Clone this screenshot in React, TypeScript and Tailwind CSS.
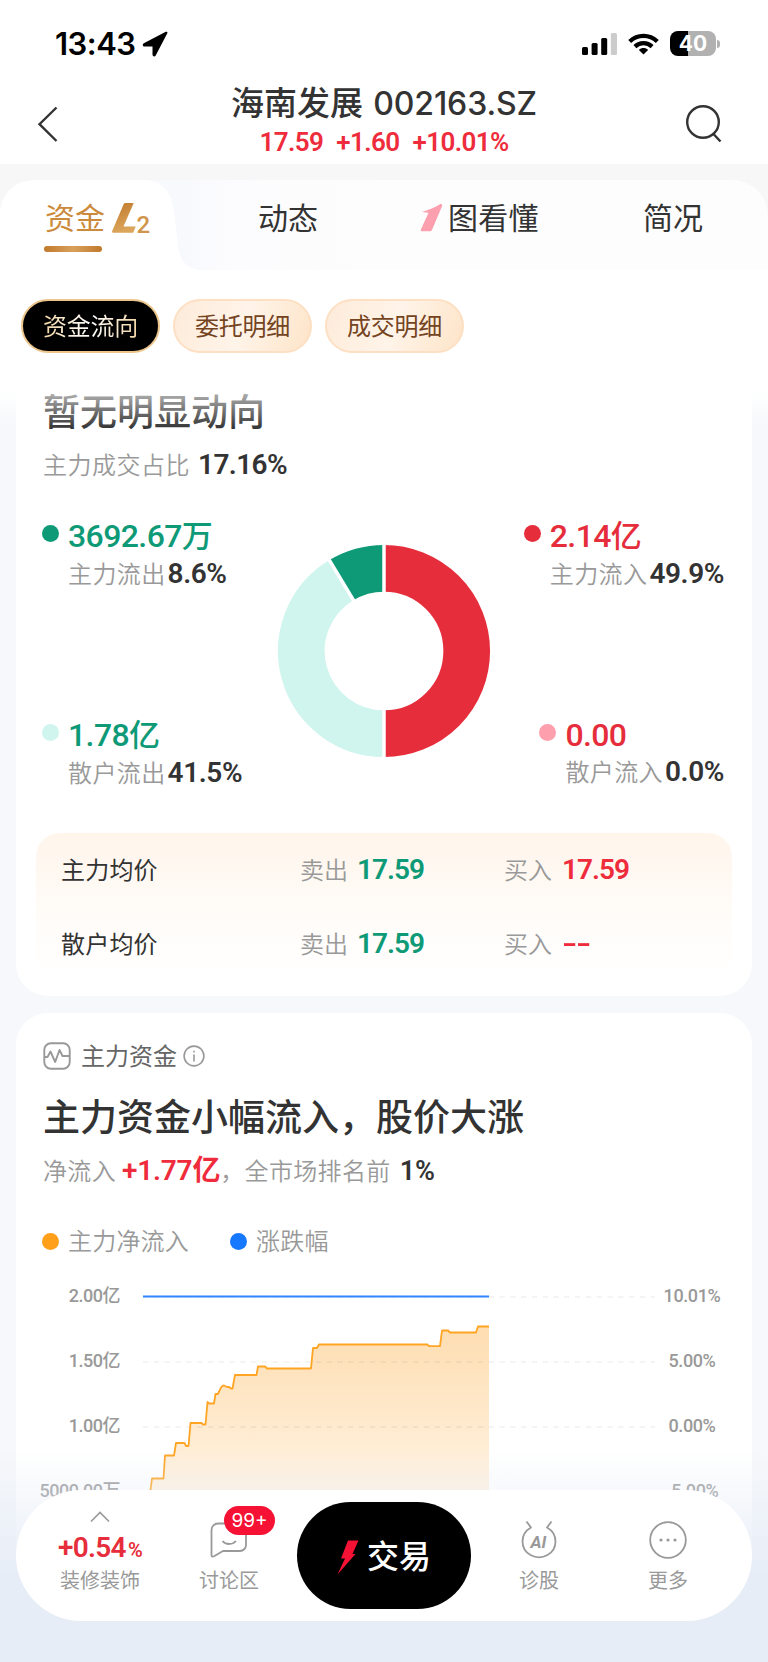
import type { ReactNode } from "react"
import { clsx } from "clsx"

const actions = ["资金流向", "委托明细", "成交明细"]

const prices = [
  { label: "主力均价", sell: "17.59", buy: "17.59" },
  { label: "散户均价", sell: "17.59", buy: "--" },
]

const segments = [
  { from: 0, to: 180, color: "#e62d3b" },
  { from: 180, to: 329, color: "#d0f5ee" },
  { from: 329, to: 360, color: "#0e9a77" },
]

const axis = [
  { left: "2.00亿", right: "10.01%" },
  { left: "1.50亿", right: "5.00%" },
  { left: "1.00亿", right: "0.00%" },
  { left: "5000.00万", right: "-5.00%" },
]

const flowLine =
  "M0 262 L7.5 230 L9 218.5 H20.5 L22 195.5 H31 L33 183 H41.5 L43 186 H45.5 L47.5 163 H58.5 L60 164.5 H62.5 L64.5 142 L66 143.5 H71 L72.5 134 H75 C77 130 78 125 81 125.5 L84 127 H86 L88 128.5 H89.5 L92 115 H113.500 L115 106.500 H122 L124 108.500 H168 L170 88 H174 L176 84.500 H284.500 L286 86.200 H297 L299 70.500 H305 L307 72.500 H333 L335 66.500 H346"

function StatusBar() {
  return (
    <div className="flex h-21 items-start justify-between pr-[48px] pl-[55px] text-black">
      <div className="mt-[24px] flex items-center gap-[6px]">
        <span className="font-[family-name:Inter] text-[31px] leading-10 font-semibold tracking-[-0.5px]">13:43</span>
        <svg width="26" height="26" viewBox="0 0 26 26">
          <path d="M23.800.8 1.800 12.300c-1.700.9-1.200 3.200.7 3.200H10.500v8c0 2 2.300 2.600 3.200.9L25.300 2.300c.5-1.200-.4-2-1.500-1.500z" fill="#000" />
        </svg>
      </div>
      <div className="mt-[31px] flex items-center">
        <svg width="36" height="24" viewBox="0 0 36 24">
          <rect x="0" y="15" width="6" height="8" rx="1.500" />
          <rect x="9.600" y="11" width="6" height="12" rx="1.500" />
          <rect x="19.200" y="6" width="6" height="17" rx="1.500" />
          <rect x="28.800" y="1" width="6.200" height="22" rx="1.500" fill="#ccc" />
        </svg>
        <svg className="ml-[10px]" width="31" height="24" viewBox="0 0 31 24" fill="none" stroke="#000" strokeWidth="4.200">
          <path d="M1.700 9.400C9.500 1.900 21.500 1.900 29.300 9.400" />
          <path d="M6.900 14.600C11.800 10 19.200 10 24.100 14.600" />
          <path d="M15.500 22.600 10.900 17.900C13.500 15.500 17.500 15.500 20.100 17.900Z" fill="#000" stroke="none" />
        </svg>
        <div className="ml-[11px] flex h-[25px] w-[46px] items-center justify-center rounded-[8px] bg-linear-to-r from-black from-40% to-[#b1b1b1] to-40% font-[family-name:Inter] text-[21px] font-bold text-white">
          40
        </div>
        <div className="ml-px h-2 w-[3px] rounded-r-full bg-[#b1b1b1]" />
      </div>
    </div>
  )
}

function Header() {
  return (
    <header className="bg-white">
      <StatusBar />
      <div className="flex h-20 justify-between px-[37px]">
        <svg className="mt-[22px] mr-[10px]" width="36" height="36" viewBox="0 0 36 36" fill="none" stroke="#333" strokeWidth="2.400">
          <path d="M19.500 1.500 2.500 18.200 19.500 35" />
        </svg>
        <div className="text-center">
          <h1 className="text-[33px] leading-[39px] font-medium whitespace-pre text-[#333]">
            海南发展 <span className="ml-[2px] font-[family-name:Inter] text-[32px] tracking-[-0.1px]">002163.SZ</span>
          </h1>
          <div className="flex justify-center gap-[13px] text-[26px] leading-[38px] font-semibold tracking-[-0.6px] text-[#ee2c3c]">
            <span>17.59</span>
            <span>+1.60</span>
            <span>+10.01%</span>
          </div>
        </div>
        <svg className="mt-[21px] mr-[9px]" width="37" height="38" viewBox="0 0 37 38" fill="none" stroke="#333" strokeWidth="2.400">
          <circle cx="18" cy="17" r="15.800" />
          <path d="M28 28.500 35.500 36.500" />
        </svg>
      </div>
    </header>
  )
}

function Tabs() {
  return (
    <nav className="relative mt-4 flex h-[90px] rounded-t-[36px] bg-linear-to-r from-[#f8f9fd] from-24% via-[#fcfcfe] via-30% to-[#fdfdfd] to-50% text-[30px] leading-[42px] text-[#333]">
      <svg className="absolute top-0 left-0" width="204" height="90" viewBox="0 0 204 90">
        <path d="M0 90V36C0 14 14 0 36 0H144C164 0 172 14 174 32L178 66C180 82 188 90 204 90Z" fill="#fff" />
      </svg>
      <div className="relative ml-[44px] w-[214px] pt-[18px] text-[#cb8a3c]">
        <div className="ml-px flex">
          <span>资金</span>
          <svg className="mt-[5px] ml-[5px] overflow-visible" width="48" height="36" viewBox="0 0 48 36">
            <defs>
              <linearGradient id="gold" x1="0" y1="0" x2="0.300" y2="1">
                <stop offset="0" stopColor="#c07a2c" />
                <stop offset="1" stopColor="#dba55c" />
              </linearGradient>
            </defs>
            <path d="M13.500 1.500c.4-1 1-1.500 2-1.500h8.200L13.500 23.500h12.200l-2.500 6.200H3.200c-1 0-1.500-.6-1-1.600z" fill="url(#gold)" />
            <text x="26.500" y="29.500" fontSize="24" fontWeight="500" fill="#d0954a">2</text>
          </svg>
        </div>
        <div className="mt-[6px] h-[6px] w-[58px] rounded-[3px] bg-linear-to-r from-[#c17a2b] via-[#d8a05a] to-[#c17a2b]" />
      </div>
      <span className="w-[161px] pt-[18px]">动态</span>
      <div className="flex w-[224px] pt-[18px]">
        <svg className="mt-[5px] mr-[4px] ml-px" width="24" height="30" viewBox="0 0 24 30">
          <path d="M2 9C9 6.800 15 4.500 20 1.200c1.600-.8 2.800.3 2 2L12.200 26.500c-.5 1.200-1.300 1.800-2.500 1.800H2c-1 0-1.600-.8-1.100-1.800L8.500 9.800z" fill="#fc9fae" />
        </svg>
        <span className="tracking-[0.3px]">图看懂</span>
      </div>
      <span className="pt-[18px]">简况</span>
    </nav>
  )
}

function ActionPills() {
  return (
    <div className="flex h-[115px] gap-[13px] bg-white pt-[29px] pl-[21px]">
      {actions.map((label, i) => (
        <button
          key={label}
          className={clsx(
            "h-[54px] w-[139px] rounded-full border-2 text-center text-[24px] leading-[52px] tracking-[-0.2px]",
            i === 0 ? "border-[#ecc68c] bg-black" : "border-[#fde0c3] bg-linear-110 from-[#fdebda] via-[#fff4e9] to-[#fde4c8] text-[#74441f]"
          )}
        >
          {i === 0 ? (
            <span className="bg-linear-to-r from-[#f3d6a5] via-white to-[#f3d6a5] bg-clip-text text-transparent">{label}</span>
          ) : (
            label
          )}
        </button>
      ))}
    </div>
  )
}

function Stat({ dot, color, value, unit, label, percent }: {
  dot: string
  color: string
  value: string
  unit?: string
  label: string
  percent: string
}) {
  return (
    <div className="flex">
      <span className={clsx("mt-[9px] mr-[9px] size-[17px] rounded-full", dot)} />
      <div>
        <div className={clsx("text-[32px] leading-10 font-medium tracking-[-0.6px]", color)}>
          {value}
          {unit && <span className="text-[31px]">{unit}</span>}
        </div>
        <Caption label={label}>{percent}</Caption>
      </div>
    </div>
  )
}

function Caption({ label, children }: { label: string; children: ReactNode }) {
  return (
    <div className="-mt-px flex items-baseline text-[24px] leading-9 tracking-[0.4px] text-[#999]">
      <span className="font-[350]">{label}</span>
      <span className="ml-[2px] text-[28px] font-semibold tracking-[-0.4px] text-[#333]">{children}</span>
    </div>
  )
}

function arc(from: number, to: number) {
  const r = 82.7
  const point = (deg: number) => {
    const rad = (deg * Math.PI) / 180
    return `${107 + r * Math.sin(rad)} ${107 - r * Math.cos(rad)}`
  }
  return `M${point(from)} A${r} ${r} 0 0 1 ${point(to)}`
}

function Donut() {
  return (
    <svg className="mt-[28px]" width="214" height="214" viewBox="0 0 214 214" fill="none">
      {segments.map((s) => (
        <path key={s.from} d={arc(s.from, s.to)} stroke={s.color} strokeWidth="46.700" />
      ))}
      {segments.map((s) => (
        <path key={s.from} d="M107 107V0" stroke="#fff" strokeWidth="3.500" transform={`rotate(${s.from} 107 107)`} />
      ))}
    </svg>
  )
}

function FlowCard() {
  return (
    <section className="mx-4 h-[611px] rounded-b-[32px] bg-white">
      <h2 className="ml-[27px] pt-px text-[37px] leading-[55px] font-medium text-[#333]">暂无明显动向</h2>
      <div className="mt-[6px] ml-[27px] flex items-baseline text-[24px] leading-9 tracking-[0.5px] text-[#999]">
        <span className="font-[350]">主力成交占比</span>
        <span className="ml-[8px] text-[28px] font-semibold tracking-[-0.6px] text-[#333]">17.16%</span>
      </div>
      <div className="mt-[32px] ml-[26px] flex h-[317px]">
        <div className="flex w-[235px] flex-col gap-[122px]">
          <Stat dot="bg-[#0e9a77]" color="text-[#0e9a77]" value="3692.67" unit="万" label="主力流出" percent="8.6%" />
          <Stat dot="bg-[#d0f5ee]" color="text-[#0e9a77]" value="1.78" unit="亿" label="散户流出" percent="41.5%" />
        </div>
        <Donut />
        <div className="flex w-[233px] flex-col items-end gap-[122px]">
          <Stat dot="bg-[#e62d3b]" color="text-[#e62d3b]" value="2.14" unit="亿" label="主力流入" percent="49.9%" />
          <Stat dot="bg-[#fe9fae]" color="text-[#e62d3b]" value="0.00" label="散户流入" percent="0.0%" />
        </div>
      </div>
      <div className="mx-5 h-[144px] rounded-[24px] bg-linear-to-b from-[#fff5eb] via-[#fffbf7] to-white">
        {prices.map((row) => (
          <div key={row.label} className="flex h-[74px] items-baseline pl-[25px] text-[24px] leading-[74px] text-[#999]">
            <span className="w-[239px] tracking-[0.2px] text-[#333]">{row.label}</span>
            <span className="w-[57px] font-[350]">卖出</span>
            <span className="w-[147px] text-[28px] font-semibold tracking-[-1px] text-[#0e9a77]">{row.sell}</span>
            <span className="w-[58px] font-[350]">买入</span>
            <span className={clsx("text-[28px] font-semibold tracking-[-1px] text-[#ee2c3c]", row.buy === "--" && "origin-left scale-x-150")}>
              {row.buy}
            </span>
          </div>
        ))}
      </div>
    </section>
  )
}

function Chart() {
  return (
    <div className="-mt-px flex">
      <div className="mt-[3px] flex w-[104px] flex-col text-right text-[18px] leading-[65px] font-medium tracking-[-0.5px] text-[#999]">
        {axis.map((tick) => (
          <span key={tick.left}>{tick.left}</span>
        ))}
      </div>
      <svg className="ml-[23px]" width="512" height="260" viewBox="0 0 512 260" fill="none">
        <defs>
          <linearGradient id="area" x1="0" y1="66" x2="0" y2="280" gradientUnits="userSpaceOnUse">
            <stop offset="0" stopColor="#feddb1" />
            <stop offset="1" stopColor="#fff9f0" />
          </linearGradient>
        </defs>
        <path d={`${flowLine} V280 H0 Z`} fill="url(#area)" />
        <g stroke="#000" strokeOpacity="0.060" strokeWidth="1.500" strokeDasharray="5.400 5.400">
          <path d="M0 37H512" />
          <path d="M0 102H512" />
          <path d="M0 167H512" />
        </g>
        <path d={flowLine} stroke="#ffa423" strokeWidth="1.800" strokeLinejoin="round" />
        <path d="M0 36.500H346" stroke="#2f86ff" strokeWidth="2" />
      </svg>
      <div className="mt-[3px] flex w-[74px] flex-col text-center text-[18px] leading-[65px] font-medium tracking-[-0.4px] text-[#999]">
        {axis.map((tick) => (
          <span key={tick.right}>{tick.right}</span>
        ))}
      </div>
    </div>
  )
}

function MainFundCard() {
  return (
    <section className="mx-4 mt-[17px] h-[660px] rounded-t-[32px] bg-white pt-[25px]">
      <div className="ml-[27px] flex h-9 items-center text-[24px] text-[#666]">
        <svg width="28" height="28" viewBox="0 0 28 28" fill="none" stroke="#999" strokeWidth="1.900" strokeLinejoin="round">
          <rect x="1.300" y="1.300" width="25.400" height="25.400" rx="6.500" />
          <path d="M1.300 15H4.500L7.500 9.500L12.200 20L16.500 8L19.500 14H26.700" />
        </svg>
        <span className="mt-[2px] ml-[10px]">主力资金</span>
        <svg className="ml-[6px]" width="22" height="22" viewBox="0 0 22 22" fill="none" stroke="#999" strokeWidth="1.600">
          <circle cx="11" cy="11" r="9.900" />
          <path d="M11 9.500V16.500M11 5.800V7.500" />
        </svg>
      </div>
      <h2 className="mt-[18px] ml-[27px] text-[37px] leading-[54px] font-medium text-[#333]">主力资金小幅流入，股价大涨</h2>
      <div className="mt-[7px] ml-[27px] flex items-baseline text-[24px] leading-9 tracking-[0.35px] text-[#999]">
        <span className="font-[350]">净流入</span>
        <span className="ml-[6px] text-[28px] font-semibold tracking-[-0.2px] text-[#ee2c3c]">+1.77亿</span>
        <span className="font-[350]">，全市场排名前</span>
        <span className="ml-[9px] text-[27px] font-semibold tracking-normal text-[#333]">1%</span>
      </div>
      <div className="mt-[33px] mb-[2px] ml-[26px] flex h-9 items-center text-[24px] font-[350] tracking-[0.2px] text-[#999]">
        <i className="mr-[9px] size-[17px] rounded-full bg-[#ff9f1a]" />
        <span className="mt-[2px]">主力净流入</span>
        <i className="mr-[9px] ml-[41px] size-[17px] rounded-full bg-[#1677ff]" />
        <span className="mt-[2px]">涨跌幅</span>
      </div>
      <Chart />
    </section>
  )
}

function NavItem({ label, className, children }: { label: string; className?: string; children: ReactNode }) {
  return (
    <div className={clsx("flex flex-col items-center text-[20px] text-[#999]", className)}>
      <div className="flex h-[74px] flex-col items-center justify-end">{children}</div>
      <span className="leading-[35px]">{label}</span>
    </div>
  )
}

function BottomBar() {
  return (
    <div className="absolute inset-x-0 bottom-0 h-[212px] bg-linear-to-b from-[#e7edf7]/0 to-[#e7edf7] to-60% px-4 pt-[40px]">
      <div className="flex h-[131px] rounded-full bg-white">
        <NavItem label="装修装饰" className="w-[168px]">
          <svg width="20" height="12" viewBox="0 0 20 12" fill="none" stroke="#999" strokeWidth="1.600">
            <path d="M1 10.500 10 1.500 19 10.500" />
          </svg>
          <div className="mt-[7px] -mb-[4px] text-[28px] leading-9 font-semibold tracking-[-0.7px] text-[#e62d3b]">
            +0.54<span className="ml-[2px] text-[20px]">%</span>
          </div>
        </NavItem>
        <NavItem label="讨论区" className="w-[90px]">
          <div className="relative mb-[5px]">
            <svg width="38" height="37" viewBox="0 0 38 37" fill="none" stroke="#999" strokeWidth="1.800" strokeLinejoin="round">
              <path d="M8 1.500H30a6 6 0 0 1 6 6V23a6 6 0 0 1-6 6H13L4 34.300C2.500 35 1.500 34.800 1.500 33V8a6.500 6.500 0 0 1 6.500-6.500Z" />
              <path d="M12.500 19c3 4 10 4 13.500 0" />
            </svg>
            <span className="absolute -top-[16px] left-[14px] h-[29px] w-[51px] rounded-full bg-[#f51235] text-center font-[family-name:Inter] text-[19px] leading-[30px] text-white">99+</span>
          </div>
        </NavItem>
        <button className="mt-3 ml-[23px] flex h-[107px] w-[174px] items-center justify-center gap-2 rounded-full bg-black text-[32px] font-medium text-white">
          <svg className="mt-[4px]" width="22" height="35" viewBox="0 0 22 35">
            <path d="M11 .5H21.500L15.500 14H18.500L.5 34.500 8 18.500H4Z" fill="#f51235" />
          </svg>
          <span className="mt-[2px]">交易</span>
        </button>
        <NavItem label="诊股" className="ml-[18px] w-[100px]">
          <svg className="mb-[4px]" width="40" height="41" viewBox="0 0 40 41" fill="none" stroke="#999" strokeWidth="1.800">
            <path d="M7.500 2.500 12 8.500C.5 15 1 30 11.500 36 17 39 23 39 28.500 36 39 30 39.500 15 28 8.500L32.500 2.500" strokeLinejoin="round" />
            <text x="11.500" y="29" fontSize="17" fontWeight="700" fontStyle="italic" fill="#999" stroke="none">AI</text>
          </svg>
        </NavItem>
        <NavItem label="更多" className="ml-[29px] w-[100px]">
          <svg className="mb-[5px]" width="38" height="38" viewBox="0 0 38 38" fill="none" stroke="#999" strokeWidth="1.800">
            <circle cx="19" cy="19" r="17.800" />
            <g fill="#999" stroke="none">
              <circle cx="12" cy="19" r="1.600" />
              <circle cx="19" cy="19" r="1.600" />
              <circle cx="26" cy="19" r="1.600" />
            </g>
          </svg>
        </NavItem>
      </div>
    </div>
  )
}

export default function App() {
  return (
    <div className="relative h-[1662px] w-[768px] overflow-hidden bg-[#f7f7f7] font-[family-name:Roboto,'Noto_Sans_CJK_SC',sans-serif]">
      <Header />
      <Tabs />
      <ActionPills />
      <main className="relative bg-linear-to-b from-white to-[#f6f8fb] to-[28px]">
        <FlowCard />
        <MainFundCard />
        <div className="absolute inset-x-0 top-0 h-11 bg-linear-to-b from-white/75 to-white/0" />
      </main>
      <BottomBar />
    </div>
  )
}
